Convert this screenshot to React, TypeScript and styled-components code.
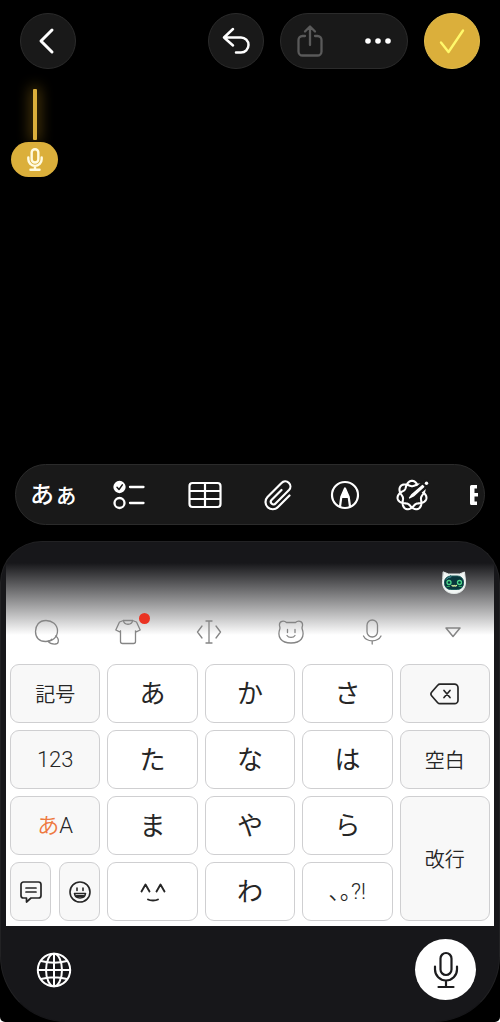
import React from 'react';
import styled, { createGlobalStyle } from 'styled-components';

const GlobalStyle = createGlobalStyle`
  *, *::before, *::after { box-sizing: border-box; }
  html { background: #fff; }
  body {
    margin: 0;
    font-family: "Noto Sans CJK JP", "Liberation Sans", sans-serif;
    -webkit-font-smoothing: antialiased;
  }
  button {
    margin: 0;
    padding: 0;
    border: 0;
    background: none;
    color: inherit;
    font: inherit;
    cursor: pointer;
  }
  svg { display: block; fill: none; stroke: currentColor; stroke-linecap: round; stroke-linejoin: round; }
`;

const Screen = styled.div`
  display: flex;
  flex-direction: column;
  min-height: 100vh;
  background: #000;
  color: #fff;
  border-radius: 0 0 5px 5px;
  overflow: hidden;
`;

/* ---------- top navigation ---------- */

const Header = styled.header`
  display: flex;
  align-items: center;
  gap: 16px;
  padding: 13px 20px 0;
`;

const RoundButton = styled.button<{ $accent?: boolean; $pushEnd?: boolean }>`
  display: grid;
  place-items: center;
  width: 56px;
  height: 56px;
  border-radius: 50%;
  border: 1px solid ${(p) => (p.$accent ? '#e3bd4d' : '#2b2b2b')};
  background: ${(p) => (p.$accent ? '#dbaf3b' : '#191919')};
  color: ${(p) => (p.$accent ? '#fff86b' : '#fff')};
  margin-right: ${(p) => (p.$pushEnd ? 'auto' : '0')};
`;

const ActionPill = styled.div`
  display: flex;
  justify-content: space-between;
  width: 128px;
  height: 56px;
  border-radius: 28px;
  border: 1px solid #2b2b2b;
  background: #191919;
`;

const PillButton = styled.button<{ $dim?: boolean }>`
  display: grid;
  place-items: center;
  width: 58px;
  color: ${(p) => (p.$dim ? '#5a5a5a' : '#fff')};
`;

/* ---------- note ---------- */

const NoteArea = styled.main`
  position: relative;
  flex: 1;
  display: flex;
  min-height: 120px;
`;

const NoteInput = styled.textarea`
  flex: 1;
  border: 0;
  outline: 0;
  resize: none;
  padding: 20px 32px;
  background: transparent;
  color: #fff;
  caret-color: transparent;
  font: 28px/40px "Noto Sans CJK JP", sans-serif;
`;

const DictationCaret = styled.div`
  position: absolute;
  top: 20px;
  left: 11px;
  display: flex;
  flex-direction: column;
  align-items: center;
  gap: 2px;
`;

const CaretBar = styled.span`
  width: 4px;
  height: 51px;
  border-radius: 1px;
  background: #dbaf3b;
  box-shadow: 0 0 14px 2px rgba(219, 165, 30, 0.45);
`;

const CaretMic = styled.button`
  display: grid;
  place-items: center;
  width: 47px;
  height: 35px;
  border-radius: 18px;
  background: #dbaf3b;
  color: #fffbe0;
`;

/* ---------- formatting bar ---------- */

const FormatBar = styled.div`
  display: grid;
  grid-template-columns: 76fr 74fr 78fr 68fr 66fr 68fr 38fr;
  height: 61px;
  margin: 0 15px 16px;
  border: 1px solid #2b2b2b;
  border-radius: 31px;
  background: #191919;
  overflow: hidden;
`;

const FormatButton = styled.button<{ $cut?: boolean }>`
  display: flex;
  align-items: center;
  justify-content: ${(p) => (p.$cut ? 'flex-end' : 'center')};
  padding-right: ${(p) => (p.$cut ? '6px' : '0')};
  font-family: "Liberation Sans", "Noto Sans CJK JP", sans-serif;
  font-size: 24px;
  font-weight: 500;
  line-height: 32px;
  white-space: nowrap;
`;

/* ---------- keyboard ---------- */

const Keyboard = styled.section`
  padding: 21px 5px 0;
  border: 1px solid #222224;
  border-bottom-color: #17171a;
  border-radius: 42px 42px 66px 66px;
  background: #17171a;
`;

const KeyPanel = styled.div`
  background: linear-gradient(#17171a 0, #fff 72px);
  color: #262626;
`;

const CandidateRow = styled.div`
  display: flex;
  align-items: center;
  justify-content: flex-end;
  height: 40px;
  padding-right: 26px;
`;

const ToolRow = styled.div`
  display: grid;
  grid-template-columns: repeat(6, 1fr);
  height: 58px;
  color: #858585;
`;

const ToolButton = styled.button`
  display: grid;
  place-items: center;
`;

const ToolIcon = styled.span`
  position: relative;
`;

const NewDot = styled.span`
  position: absolute;
  top: -6px;
  right: -9px;
  width: 11px;
  height: 11px;
  border-radius: 50%;
  background: #ea3323;
`;

const KeyGrid = styled.div`
  display: grid;
  grid-template-columns: repeat(5, 1fr);
  grid-auto-rows: 59px;
  gap: 7px;
  padding: 3px 4px 5px;
`;

const KeyPair = styled.div`
  display: grid;
  grid-template-columns: 1fr 1fr;
  gap: 8px;
`;

const Key = styled.button<{ $fn?: boolean; $tall?: boolean }>`
  display: flex;
  align-items: center;
  justify-content: center;
  border: 1px solid #cfcfd1;
  border-radius: 9px;
  background: ${(p) => (p.$fn ? '#f8f8f8' : '#fff')};
  font-family: ${(p) =>
    p.$fn ? '"Noto Sans CJK JP", sans-serif' : '"Liberation Sans", "Noto Sans CJK JP", sans-serif'};
  font-size: ${(p) => (p.$fn ? '20px' : '26px')};
  font-weight: ${(p) => (p.$fn ? 350 : 400)};
  line-height: 32px;
  grid-row: ${(p) => (p.$tall ? 'span 2' : 'auto')};
`;

const KeyLabel = styled.span<{ $active?: boolean }>`
  font-family: Roboto, "Noto Sans CJK JP", sans-serif;
  font-size: 22px;
  font-weight: 350;
  color: ${(p) => (p.$active ? '#ee7940' : 'inherit')};
`;

const SystemRow = styled.div`
  display: flex;
  align-items: center;
  justify-content: space-between;
  padding: 13px 18px 21px 30px;
`;

const SystemButton = styled.button<{ $filled?: boolean }>`
  display: grid;
  place-items: center;
  width: ${(p) => (p.$filled ? '61px' : '36px')};
  height: ${(p) => (p.$filled ? '61px' : '36px')};
  border-radius: 50%;
  background: ${(p) => (p.$filled ? '#fff' : 'none')};
  color: ${(p) => (p.$filled ? '#1c1c1e' : '#fff')};
`;

/* ---------- drawings ---------- */

const BackIcon = () => (
  <svg width="26" height="28" viewBox="0 0 26 28" strokeWidth="3">
    <path d="M17 3L6 14l11 11" />
  </svg>
);

const UndoIcon = () => (
  <svg width="30" height="30" viewBox="0 0 30 30" strokeWidth="2.5">
    <path d="M12 3L3 11.500l9 8M3 11.500h17a7.300 7.300 0 0 1 0 15h-5" />
  </svg>
);

const ShareIcon = () => (
  <svg width="28" height="34" viewBox="0 0 28 34" strokeWidth="2.300">
    <path d="M9 12H6.500A4 4 0 0 0 2.500 16v11.500a4 4 0 0 0 4 4h15a4 4 0 0 0 4-4V16a4 4 0 0 0-4-4H19M14 21V3M9 7.500l5-5 5 5" />
  </svg>
);

const MoreIcon = () => (
  <svg width="26" height="8" viewBox="0 0 26 8" style={{ fill: 'currentColor', stroke: 'none' }}>
    <circle cx="3" cy="4" r="2.800" />
    <circle cx="13" cy="4" r="2.800" />
    <circle cx="23" cy="4" r="2.800" />
  </svg>
);

const CheckIcon = () => (
  <svg width="28" height="28" viewBox="0 0 28 28" strokeWidth="2.400">
    <path d="M3 15.500L10.500 25 25 3.500" />
  </svg>
);

const MicIcon = ({ width, stroke }: { width: number; stroke: number }) => (
  <svg width={width} height={Math.round((width * 38) / 26)} viewBox="0 0 26 38" strokeWidth={stroke}>
    <rect x="7.500" y="2" width="11" height="22" rx="5.500" />
    <path d="M2 15.500v3a11 11 0 0 0 22 0v-3M13 29.500V36M5.500 36h15" />
  </svg>
);

const ChecklistIcon = () => (
  <svg width="32" height="30" viewBox="0 0 32 30" strokeWidth="2.300">
    <circle cx="6.500" cy="7" r="5" fill="currentColor" />
    <path d="M4 7.300l2 2.200 3.300-4.600" stroke="#191919" strokeWidth="1.500" />
    <circle cx="6.500" cy="23" r="5" />
    <path d="M17 7h13.500M17 23h13.500" />
  </svg>
);

const TableIcon = () => (
  <svg width="34" height="28" viewBox="0 0 34 28" strokeWidth="2.200">
    <rect x="1.500" y="2" width="31" height="24" rx="3" />
    <path d="M2 10h30M2 18h30M17 2v24" />
  </svg>
);

const ClipIcon = () => (
  <svg width="28" height="32" viewBox="0 0 28 32" strokeWidth="2.200">
    <path d="M25.500 16.500L14 28A7 7 0 0 1 3.500 18L17.500 4A4.900 4.900 0 0 1 25 11L11.500 24.500a2.600 2.600 0 0 1-4-3.500L17.500 11" />
  </svg>
);

const MarkupIcon = () => (
  <svg width="30" height="30" viewBox="0 0 30 30" strokeWidth="2.200">
    <circle cx="15" cy="15" r="13" />
    <path d="M10 26.500l1.300-9.500h7.400L20 26.500M11.300 17L15 8.500l3.700 8.500" />
    <path d="M12.500 16.500L15 8l2.500 8.500z" fill="currentColor" stroke="none" />
  </svg>
);

/* Seven lobes traced over two turns, so that neighbouring strands cross. */
const rosette = Array.from({ length: 281 }, (_, i) => {
  const t = (i / 280) * Math.PI * 4;
  const r = 12 + 2.700 * Math.cos(3.5 * t);
  const x = 17 + r * Math.sin(t);
  const y = 17.500 - r * Math.cos(t);
  return `${i ? 'L' : 'M'}${x.toFixed(2)} ${y.toFixed(2)}`;
}).join('');

const WandIcon = () => (
  <svg width="34" height="34" viewBox="0 0 34 34" strokeWidth="2.100">
    <path d={rosette} />
    <path d="M18 17L31 5.500" stroke="#191919" strokeWidth="8" />
    <path d="M14.500 20l2.500-3.500L27.500 7.500l1.200 1.300L18.500 18z" fill="currentColor" strokeWidth="1.300" />
    <circle cx="31.500" cy="5.300" r="1.700" fill="currentColor" stroke="none" />
  </svg>
);

const CutIcon = () => (
  <svg width="9" height="20" viewBox="0 0 9 20" style={{ fill: 'currentColor', stroke: 'none' }}>
    <path d="M2.500 0H8v3.500H5.500V8H9v3.500H5.500v5H8V20H2.500A1.500 1.500 0 0 1 1 18.500v-17A1.500 1.500 0 0 1 2.500 0z" />
  </svg>
);

const RobotIcon = () => (
  <svg width="28" height="26" viewBox="0 0 28 26" strokeWidth="1">
    <path d="M3.500 2l5 2h11l5-2 .8 7c1.300 8-2.500 14.500-11.300 14.500S1.400 17 2.700 9z" fill="#f2f7f5" stroke="#e4e9e8" />
    <rect x="4.500" y="6" width="19" height="13.500" rx="6" fill="#08363c" stroke="#1a5a58" />
    <path d="M6.500 9q1.500-2 4.500-2.200" stroke="#4b98a0" />
    <circle cx="9" cy="12.500" r="2" stroke="#4dd88a" strokeWidth="1.300" />
    <circle cx="19.500" cy="12.500" r="2" stroke="#4dd88a" strokeWidth="1.300" />
    <path d="M12 15.500q1.200 1 2.200 0 1.200 1 2.300 0" stroke="#d8f0a0" strokeWidth="1.300" />
    <path d="M7 16.500h2.500M19 16.500h2.500" stroke="#2ea35e" />
  </svg>
);

const BubblesIcon = () => (
  <svg width="26" height="26" viewBox="0 0 26 26" strokeWidth="1.300">
    <path d="M12 1.500C18 1.500 23.500 5.500 23.500 12S18 22.500 11.500 22.500 1.500 18.500 1.500 12.500 5 1.500 12 1.500z" />
    <path d="M21.500 17c2.300 1.500 3.200 3.700 2.700 5.800-.3 1.700-1.200 2.200-2.900 2.200-3.300.2-5.800-.8-7.300-2.700 2-1 2.500-.5 3.500-2" />
  </svg>
);

const ShirtIcon = () => (
  <svg width="26" height="26" viewBox="0 0 26 26" strokeWidth="1.300">
    <path d="M8.500 1.500L4.500 3 .8 11l4 1.800.7-1v10.700q0 2 2 2h11q2 0 2-2V11.800l.7 1 4-1.800L21.500 3l-4-1.500z" />
    <path d="M8.500 1.500c.5 5 8.500 5 9 0" />
  </svg>
);

const CursorIcon = () => (
  <svg width="26" height="26" viewBox="0 0 26 26" strokeWidth="1.300">
    <path d="M6 7L1.500 13 6 19M20 7l4.500 6L20 19M13 2v22M10 2h6M10 24h6" />
  </svg>
);

const BearIcon = () => (
  <svg width="28" height="26" viewBox="0 0 28 26" strokeWidth="1.300">
    <path d="M9.500 3.500C7 1 2 2 2.500 6.500c.2 1.500.8 2 .3 3.500C0 18 4 24 14 24s14-6 11.200-14c-.5-1.500.1-2 .3-3.500C26 2 21 1 18.500 3.500z" />
    <path d="M10.500 10.500v3M18 10.500v3M10 16.500c1.500 2.500 6.500 2.500 8 0" />
  </svg>
);

const ThinMicIcon = () => (
  <svg width="20" height="26" viewBox="0 0 20 26" strokeWidth="1.300">
    <rect x="5" y="1" width="10.500" height="17" rx="5.200" />
    <path d="M1.500 17c1.500 3 4.500 4.800 8.700 4.800S17.500 20 19 17M10.200 22v3" />
  </svg>
);

const CollapseIcon = () => (
  <svg width="18" height="26" viewBox="0 0 18 26" strokeWidth="1.500">
    <path d="M2 9h14l-7 8.500z" />
  </svg>
);

const DeleteIcon = () => (
  <svg width="30" height="22" viewBox="0 0 30 22" strokeWidth="1.700">
    <path d="M10 1.200h14.500a3.500 3.500 0 0 1 3.500 3.500v12.500a3.500 3.500 0 0 1-3.500 3.500H10a3 3 0 0 1-2.300-1L1.800 13a3 3 0 0 1 0-4l5.900-6.700a3 3 0 0 1 2.300-1.100z" />
    <path d="M14 7.500l6 7M20 7.500l-6 7" />
  </svg>
);

const PhraseIcon = () => (
  <svg width="24" height="24" viewBox="0 0 24 24" strokeWidth="1.700">
    <path d="M4.500 2h15A2.500 2.500 0 0 1 22 4.500v11a2.500 2.500 0 0 1-2.500 2.500H12l-4.500 4v-4h-3A2.500 2.500 0 0 1 2 15.500v-11A2.500 2.500 0 0 1 4.500 2zM7 8h10M7 12h10" />
  </svg>
);

const SmileIcon = () => (
  <svg width="24" height="24" viewBox="0 0 24 24" strokeWidth="1.600">
    <circle cx="12" cy="12" r="10" />
    <path d="M9 8v2.500M15 8v2.500" />
    <path d="M6.500 13.500h11c-.5 3.500-3 4.500-5.500 4.500s-5-1-5.500-4.500z" />
    <path d="M8.500 16h7" strokeWidth="2" />
  </svg>
);

const KaomojiIcon = () => (
  <svg width="28" height="20" viewBox="0 0 28 20" strokeWidth="1.900">
    <path d="M2.500 9.500l4-7 4 7M17.500 9.500l4-7 4 7M9 17.500c2.500 1.300 7.500 1.300 10 0" />
  </svg>
);

const GlobeIcon = () => (
  <svg width="36" height="36" viewBox="0 0 36 36" strokeWidth="2">
    <circle cx="18" cy="18" r="16.200" />
    <ellipse cx="18" cy="18" rx="8" ry="16.200" />
    <path d="M18 2v32M2 18h32M5 9q13 3.500 26 0M5 27q13-3.500 26 0" />
  </svg>
);

const formatTools = [
  { label: 'チェックリスト', icon: <ChecklistIcon /> },
  { label: '表', icon: <TableIcon /> },
  { label: '添付', icon: <ClipIcon /> },
  { label: 'マークアップ', icon: <MarkupIcon /> },
  { label: '作文ツール', icon: <WandIcon /> },
];

const keyboardTools = [
  { label: '検索', icon: <BubblesIcon /> },
  { label: '着せかえ', icon: <ShirtIcon />, isNew: true },
  { label: 'カーソル', icon: <CursorIcon /> },
  { label: 'スタンプ', icon: <BearIcon /> },
  { label: '音声入力', icon: <ThinMicIcon /> },
  { label: '閉じる', icon: <CollapseIcon /> },
];

export default function App() {
  return (
    <>
      <GlobalStyle />
      <Screen>
        <Header>
          <RoundButton $pushEnd aria-label="戻る"><BackIcon /></RoundButton>
          <RoundButton aria-label="取り消す"><UndoIcon /></RoundButton>
          <ActionPill>
            <PillButton $dim aria-label="共有"><ShareIcon /></PillButton>
            <PillButton aria-label="その他"><MoreIcon /></PillButton>
          </ActionPill>
          <RoundButton $accent aria-label="完了"><CheckIcon /></RoundButton>
        </Header>

        <NoteArea>
          <NoteInput aria-label="メモ" />
          <DictationCaret>
            <CaretBar />
            <CaretMic aria-label="音声入力を停止"><MicIcon width={16} stroke={4} /></CaretMic>
          </DictationCaret>
        </NoteArea>

        <FormatBar role="toolbar" aria-label="書式">
          <FormatButton>あぁ</FormatButton>
          {formatTools.map((tool) => (
            <FormatButton key={tool.label} aria-label={tool.label}>{tool.icon}</FormatButton>
          ))}
          <FormatButton $cut aria-label="その他の書式"><CutIcon /></FormatButton>
        </FormatBar>

        <Keyboard aria-label="キーボード">
          <KeyPanel>
            <CandidateRow>
              <button aria-label="アシスタント"><RobotIcon /></button>
            </CandidateRow>
            <ToolRow>
              {keyboardTools.map((tool) => (
                <ToolButton key={tool.label} aria-label={tool.label}>
                  <ToolIcon>
                    {tool.icon}
                    {tool.isNew && <NewDot />}
                  </ToolIcon>
                </ToolButton>
              ))}
            </ToolRow>
            <KeyGrid>
              <Key $fn>記号</Key>
              <Key>あ</Key>
              <Key>か</Key>
              <Key>さ</Key>
              <Key $fn aria-label="削除"><DeleteIcon /></Key>

              <Key $fn><KeyLabel>123</KeyLabel></Key>
              <Key>た</Key>
              <Key>な</Key>
              <Key>は</Key>
              <Key $fn>空白</Key>

              <Key $fn>
                <KeyLabel $active>あ</KeyLabel>
                <KeyLabel>A</KeyLabel>
              </Key>
              <Key>ま</Key>
              <Key>や</Key>
              <Key>ら</Key>
              <Key $fn $tall>改行</Key>

              <KeyPair>
                <Key $fn aria-label="定型文"><PhraseIcon /></Key>
                <Key $fn aria-label="絵文字"><SmileIcon /></Key>
              </KeyPair>
              <Key aria-label="顔文字"><KaomojiIcon /></Key>
              <Key>わ</Key>
              <Key><KeyLabel>､｡?!</KeyLabel></Key>
            </KeyGrid>
          </KeyPanel>
          <SystemRow>
            <SystemButton aria-label="キーボード切り替え"><GlobeIcon /></SystemButton>
            <SystemButton $filled aria-label="音声入力を開始"><MicIcon width={26} stroke={2.2} /></SystemButton>
          </SystemRow>
        </Keyboard>
      </Screen>
    </>
  );
}
